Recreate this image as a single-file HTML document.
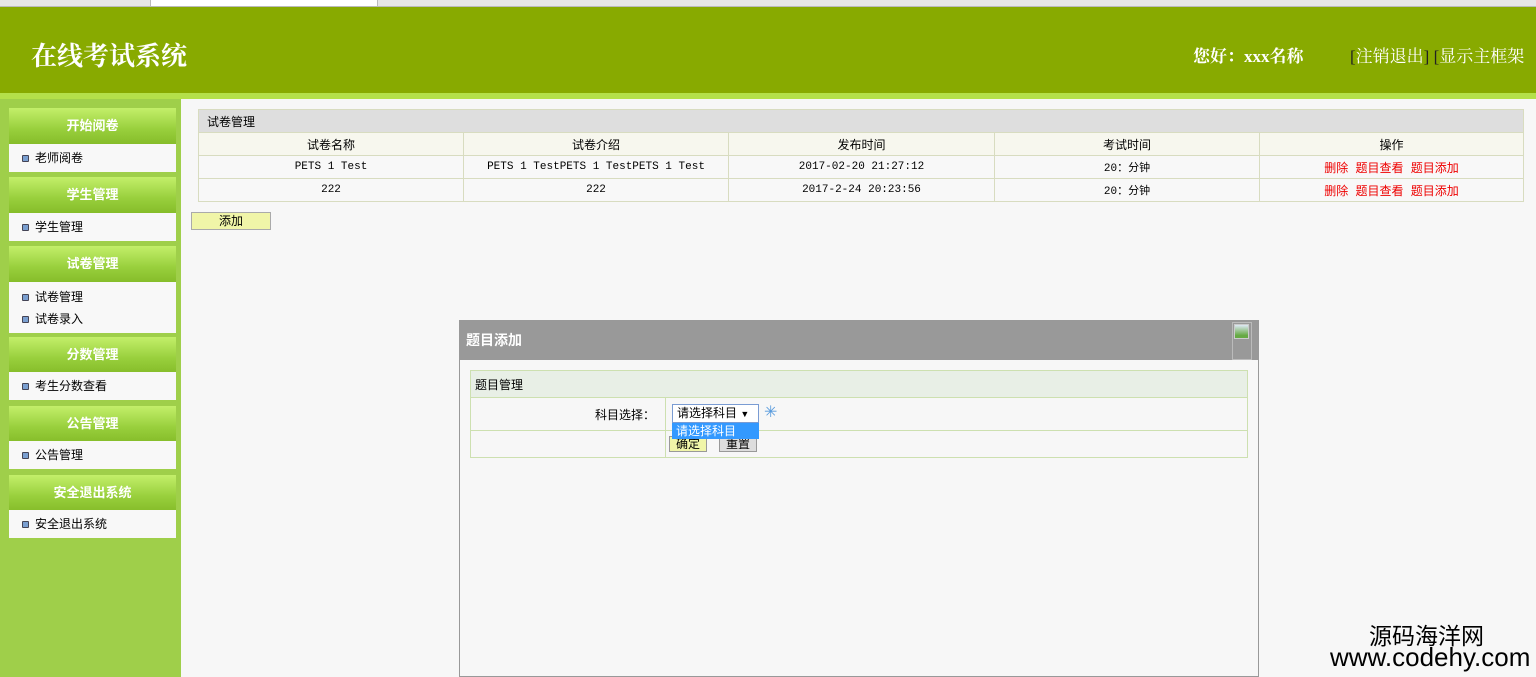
<!DOCTYPE html>
<html><head><meta charset="utf-8"><style>
*{margin:0;padding:0;box-sizing:border-box}
body{width:1536px;height:677px;overflow:hidden;background:#f7f7f7;font-family:"Liberation Sans","Noto Sans CJK SC",sans-serif;font-size:12px;color:#000;position:relative}
.abs{position:absolute}
.tabs{left:0;top:0;width:1536px;height:7px;background:#e6e6e6;border-bottom:1px solid #bbb}
.hdr{left:0;top:7px;width:1536px;height:86px;background:#88aa00}
.strip{left:0;top:93px;width:1536px;height:6px;background:#b4e04a}
.side{left:0;top:99px;width:181px;height:578px;background:#9fcf4a}
.sh{left:9px;width:167px;height:36px;background:linear-gradient(#c3ef6a,#98cf3c 60%,#86bd2a);color:#fff;font-weight:bold;font-size:13px;text-align:center;line-height:36px}
.si{left:9px;width:167px;background:#f8f8f8;padding-left:13px}
.si div{height:22px;line-height:22px;font-size:12px}
.si div:before{content:"";display:inline-block;width:5px;height:5px;background:#7a9fd0;border:1px solid #445;margin-right:6px;vertical-align:middle;border-radius:1px}
table{border-collapse:collapse}
td{border:1px solid #d8dcc0;text-align:center}
.red{color:#e00;font-size:12px}
</style></head><body>
<div class="abs tabs"></div>
<div class="abs" style="left:150px;top:0;width:228px;height:7px;background:#fff;border:1px solid #bbb;border-top:0"></div>
<div class="abs hdr"></div>
<div class="abs" style="left:31px;top:36px;color:#fff;font-size:26px;font-weight:bold;font-family:'Liberation Serif','Noto Serif CJK SC',serif;">在线考试系统</div>
<div class="abs" style="left:1193px;top:42px;color:#fff;font-size:17px;font-weight:bold;font-family:'Liberation Serif','Noto Serif CJK SC',serif;">您好：xxx名称</div>
<div class="abs" style="left:1350px;top:42px;color:#fff;font-size:17px;white-space:nowrap;font-family:'Liberation Serif','Noto Serif CJK SC',serif;"><span style="color:#222">[</span>注销退出<span style="color:#222">]</span> <span style="color:#222">[</span>显示主框架</div>
<div class="abs strip"></div>
<div class="abs side"></div>
<div class="abs sh" style="top:108px">开始阅卷</div>
<div class="abs si" style="top:144px;height:28px;padding-top:3px"><div>老师阅卷</div></div>
<div class="abs sh" style="top:177px">学生管理</div>
<div class="abs si" style="top:213px;height:28px;padding-top:3px"><div>学生管理</div></div>
<div class="abs sh" style="top:246px">试卷管理</div>
<div class="abs si" style="top:282px;height:51px;padding-top:4px"><div>试卷管理</div><div>试卷录入</div></div>
<div class="abs sh" style="top:337px">分数管理</div>
<div class="abs si" style="top:372px;height:28px;padding-top:3px"><div>考生分数查看</div></div>
<div class="abs sh" style="top:406px">公告管理</div>
<div class="abs si" style="top:441px;height:28px;padding-top:3px"><div>公告管理</div></div>
<div class="abs sh" style="top:475px">安全退出系统</div>
<div class="abs si" style="top:510px;height:28px;padding-top:3px"><div>安全退出系统</div></div>

<table class="abs" style="left:198px;top:109px;width:1326px">
<tr style="height:23px;background:#dedede"><td colspan="5" style="text-align:left;padding-left:8px">试卷管理</td></tr>
<tr style="height:23px;background:#f7f7ee"><td style="width:265px">试卷名称</td><td style="width:265px">试卷介绍</td><td style="width:266px">发布时间</td><td style="width:265px">考试时间</td><td>操作</td></tr>
<tr style="height:23px;background:#f8f8f8;font-size:11px;font-family:'Liberation Mono',monospace"><td>PETS 1 Test</td><td>PETS 1 TestPETS 1 TestPETS 1 Test</td><td>2017-02-20 21:27:12</td><td>20：分钟</td><td><span class="red">删除 题目查看 题目添加</span></td></tr>
<tr style="height:23px;background:#f8f8f8;font-size:11px;font-family:'Liberation Mono',monospace"><td>222</td><td>222</td><td>2017-2-24 20:23:56</td><td>20：分钟</td><td><span class="red">删除 题目查看 题目添加</span></td></tr>
</table>
<div class="abs" style="left:191px;top:212px;width:80px;height:18px;background:#f0f5a8;border:1px solid #aaa;text-align:center;line-height:16px">添加</div>

<div class="abs" style="left:459px;top:320px;width:800px;height:357px;border:1px solid #999;background:#f7f7f7"></div>
<div class="abs" style="left:459px;top:320px;width:800px;height:40px;background:#999;color:#fff;font-weight:bold;font-size:14px;line-height:40px;padding-left:7px">题目添加</div>
<div class="abs" style="left:1232px;top:322px;width:20px;height:38px;border:1px solid #bbb"></div>
<div class="abs" style="left:1234px;top:324px;width:15px;height:15px;background:linear-gradient(#dde8f5,#6a4 80%);border:1px solid #ccc"></div>
<table class="abs" style="left:470px;top:370px;width:778px">
<tr style="height:27px;background:#e8efe6"><td colspan="2" style="text-align:left;padding-left:4px;border-color:#cde0b0">题目管理</td></tr>
<tr style="height:33px"><td style="width:195px;text-align:right;padding-right:10px;border-color:#cde0b0">科目选择：</td><td style="border-color:#cde0b0"></td></tr>
<tr style="height:27px"><td style="border-color:#cde0b0"></td><td style="border-color:#cde0b0"></td></tr>
</table>
<div class="abs" style="left:669px;top:436px;width:38px;height:16px;background:#f0f5a8;border:1px solid #999;text-align:center;line-height:14px">确定</div>
<div class="abs" style="left:719px;top:436px;width:38px;height:16px;background:#ddd;border:1px solid #999;text-align:center;line-height:14px">重置</div>
<div class="abs" style="left:672px;top:404px;width:87px;height:19px;background:#fff;border:1px solid #7a9cd3;line-height:17px;padding-left:4px;font-size:12px">请选择科目 <span style="font-size:9px">▼</span></div>
<div class="abs" style="left:672px;top:423px;width:87px;height:16px;background:#3399ff;color:#fff;line-height:16px;padding-left:4px">请选择科目</div>
<div class="abs" style="left:764px;top:405px;color:#59d;font-size:16px;line-height:16px">✳</div>
<div class="abs" style="left:1369px;top:622px;font-size:23px;line-height:28px;font-family:'Liberation Sans','Noto Sans CJK SC',sans-serif">源码海洋网</div>
<div class="abs" style="left:1330px;top:643px;font-size:26px;line-height:28px">www.codehy.com</div>
</body></html>
